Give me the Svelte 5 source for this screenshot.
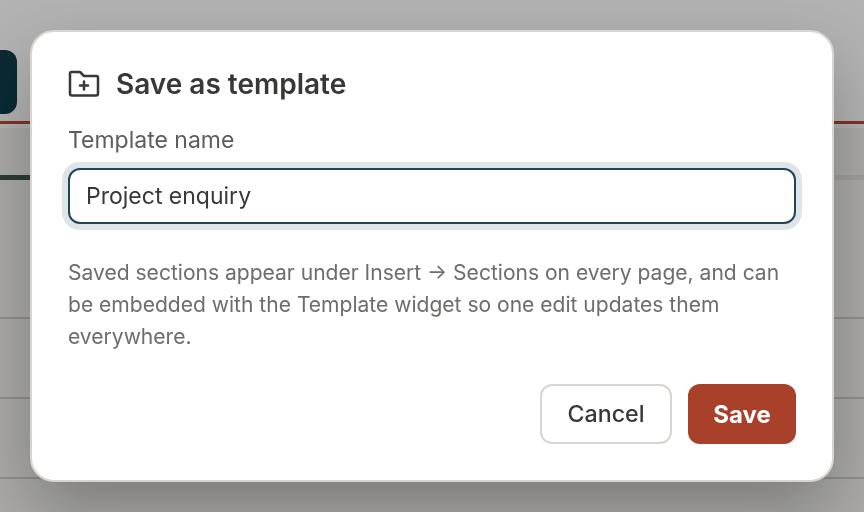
<script>
  let name = $state('Project enquiry');
  const rows = [1, 2, 3];
</script>

<div class="page">
  <header class="top">
    <div class="brand"></div>
  </header>
  <div class="rule"></div>
  <div class="tabs"><span class="tab-on"></span></div>
  <div class="list">
    {#each rows as r}
      <div class="row" data-row={r}></div>
    {/each}
  </div>
</div>

<div class="backdrop"></div>

<div class="overlay">
  <div class="modal" role="dialog" aria-labelledby="dlg-title">
    <div class="title-row">
      <svg class="icon" viewBox="0 0 32 32" width="32" height="32" fill="none" stroke="currentColor" stroke-width="2.5" stroke-linecap="round" stroke-linejoin="round" aria-hidden="true">
        <path d="M2 5.5A1.5 1.5 0 0 1 3.5 4h8.5l4 4h12.5A1.5 1.5 0 0 1 30 9.5v16a2 2 0 0 1-2 2H4a2 2 0 0 1-2-2z" />
        <path d="M16 13.5v8M12 17.5h8" />
      </svg>
      <h2 id="dlg-title">Save as template</h2>
    </div>
    <label class="field">
      <span class="label">Template name</span>
      <input type="text" bind:value={name} />
    </label>
    <p class="help">Saved sections appear under Insert → Sections on every page, and can be embedded with the Template widget so one edit updates them everywhere.</p>
    <div class="actions">
      <button class="btn cancel" type="button">Cancel</button>
      <button class="btn save" type="button">Save</button>
    </div>
  </div>
</div>

<style>
  :global(body) {
    margin: 0;
    background: #f4f3f1;
    font-family: Inter, "Noto Sans", sans-serif;
    overflow: hidden;
  }
  .page {
    height: 512px;
    display: flex;
    flex-direction: column;
    overflow: hidden;
  }
  .top {
    height: 121px;
    flex: none;
    display: flex;
    align-items: flex-start;
    padding-top: 50px;
    box-sizing: border-box;
    background: #fff;
  }
  .brand {
    width: 17px;
    height: 64px;
    border-radius: 0 12px 12px 0;
    background: #073646;
  }
  .rule {
    height: 3px;
    flex: none;
    background: #b8442c;
  }
  .tabs {
    height: 47px;
    flex: none;
    border-top: 4px solid #fff;
    border-bottom: 5px solid #e6e4e1;
    display: flex;
    align-items: flex-end;
  }
  .tab-on {
    width: 40px;
    height: 5px;
    margin-bottom: -5px;
    background: #3a5048;
  }
  .list {
    padding-top: 137px;
  }
  .row {
    height: 78px;
    border-top: 2px solid #cfcdca;
  }
  .backdrop {
    position: fixed;
    inset: 0;
    background: rgba(20, 20, 20, 0.32);
  }
  .overlay {
    position: fixed;
    inset: 0;
    display: flex;
    align-items: center;
    justify-content: center;
  }
  .modal {
    width: 804px;
    height: 452px;
    box-sizing: border-box;
    padding: 36px;
    background: #fff;
    border: 2px solid #d9d4cf;
    border-radius: 24px;
    box-shadow: 0 30px 70px rgba(0, 0, 0, 0.28);
    display: flex;
    flex-direction: column;
    color: #3a3836;
  }
  .title-row {
    display: flex;
    align-items: center;
    gap: 16px;
    height: 32px;
  }
  .icon {
    flex: none;
  }
  h2 {
    margin: 0;
    font-size: 28px;
    font-weight: 640;
    line-height: 32px;
    color: #3a3836;
  }
  .field {
    display: flex;
    flex-direction: column;
    gap: 12px;
    margin-top: 24px;
  }
  .label {
    font-size: 23px;
    line-height: 32px;
    color: #5f5c59;
  }
  input {
    height: 56px;
    box-sizing: border-box;
    padding: 0 16px;
    border: 2px solid #1f4658;
    border-radius: 12px;
    box-shadow: 0 0 0 6px #dfe4e8;
    outline: none;
    font: inherit;
    font-size: 23px;
    color: #3a3836;
    background: #fff;
  }
  .help {
    margin: 33px 0 0;
    font-size: 21.05px;
    line-height: 32px;
    color: #6f6c69;
  }
  .actions {
    margin-top: auto;
    display: flex;
    justify-content: flex-end;
    gap: 16px;
  }
  .btn {
    height: 60px;
    box-sizing: border-box;
    border-radius: 12px;
    font: inherit;
    cursor: pointer;
  }
  .cancel {
    width: 132px;
    background: #fff;
    border: 2px solid #d9d4cf;
    color: #3a3836;
    font-weight: 500;
    font-size: 23.2px;
  }
  .save {
    width: 108px;
    background: #a8402a;
    border: 0;
    color: #fff;
    font-weight: 700;
    font-size: 24px;
  }
</style>
